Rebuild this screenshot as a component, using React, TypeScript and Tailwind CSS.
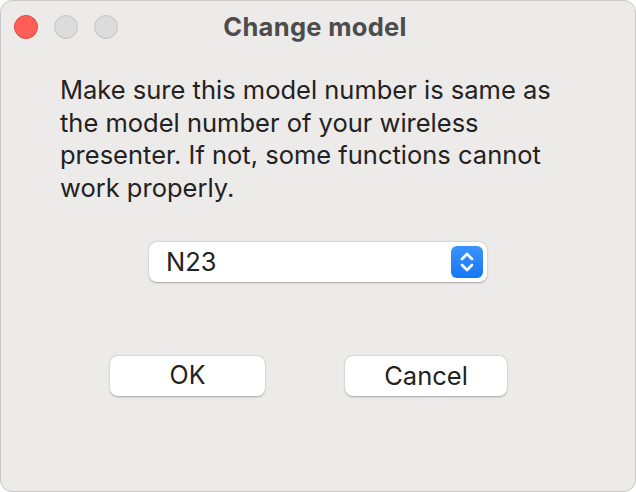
import React from "react";

export default function App() {
  const font = { fontFamily: "Inter, 'Liberation Sans', sans-serif" };
  return (
    <div className="w-[636px] h-[492px] bg-white" style={font}>
      <div className="w-[636px] h-[492px] rounded-[12px] border border-[#c9c9c9] bg-[#ecebea] flex flex-col overflow-hidden">
        <div className="relative h-[52px] flex items-center justify-center shrink-0">
          <div className="absolute left-[13px] top-[14px] flex gap-[16px]">
            <div className="w-[24px] h-[24px] rounded-full bg-[#ff5f57] border border-[#e0443e]" />
            <div className="w-[24px] h-[24px] rounded-full bg-[#dcdcdc] border border-[#c4c4c4]" />
            <div className="w-[24px] h-[24px] rounded-full bg-[#dcdcdc] border border-[#c4c4c4]" />
          </div>
          <div className="text-[25.5px] font-bold text-[#4c4c4c] tracking-[0.3px] pr-[6px]">Change model</div>
        </div>
        <div className="pl-[59px] w-[570px] mt-[21px] text-[25.5px] leading-[32.5px] text-[#222222]">
          Make sure this model number is same as the model number of your wireless presenter. If not, some functions cannot work properly.
        </div>
        <div className="flex justify-start pl-[148px] mt-[38px]">
          <div className="w-[338px] h-[40px] rounded-[8px] bg-white shadow-[0_0.5px_2px_rgba(0,0,0,0.3)] flex items-center justify-between pl-[17px] pr-[4px]">
            <span className="text-[25.5px] text-[#222222]">N23</span>
            <div className="w-[32px] h-[32px] rounded-[6px] bg-gradient-to-b from-[#3a93ff] to-[#1277f5] flex items-center justify-center">
              <svg width="18" height="24" viewBox="0 0 18 24" fill="none" stroke="white" strokeWidth="2.6" strokeLinecap="round" strokeLinejoin="round">
                <path d="M4 9 L9 4 L14 9" />
                <path d="M4 15 L9 20 L14 15" />
              </svg>
            </div>
          </div>
        </div>
        <div className="flex pl-[109px] mt-[74px] gap-[80px]">
          <button className="w-[155px] h-[40px] rounded-[8px] bg-white shadow-[0_0.5px_2px_rgba(0,0,0,0.3)] text-[25px] text-[#222222]">OK</button>
          <button className="w-[162px] h-[40px] rounded-[8px] bg-white shadow-[0_0.5px_2px_rgba(0,0,0,0.3)] text-[25.5px] text-[#222222]">Cancel</button>
        </div>
      </div>
    </div>
  );
}
